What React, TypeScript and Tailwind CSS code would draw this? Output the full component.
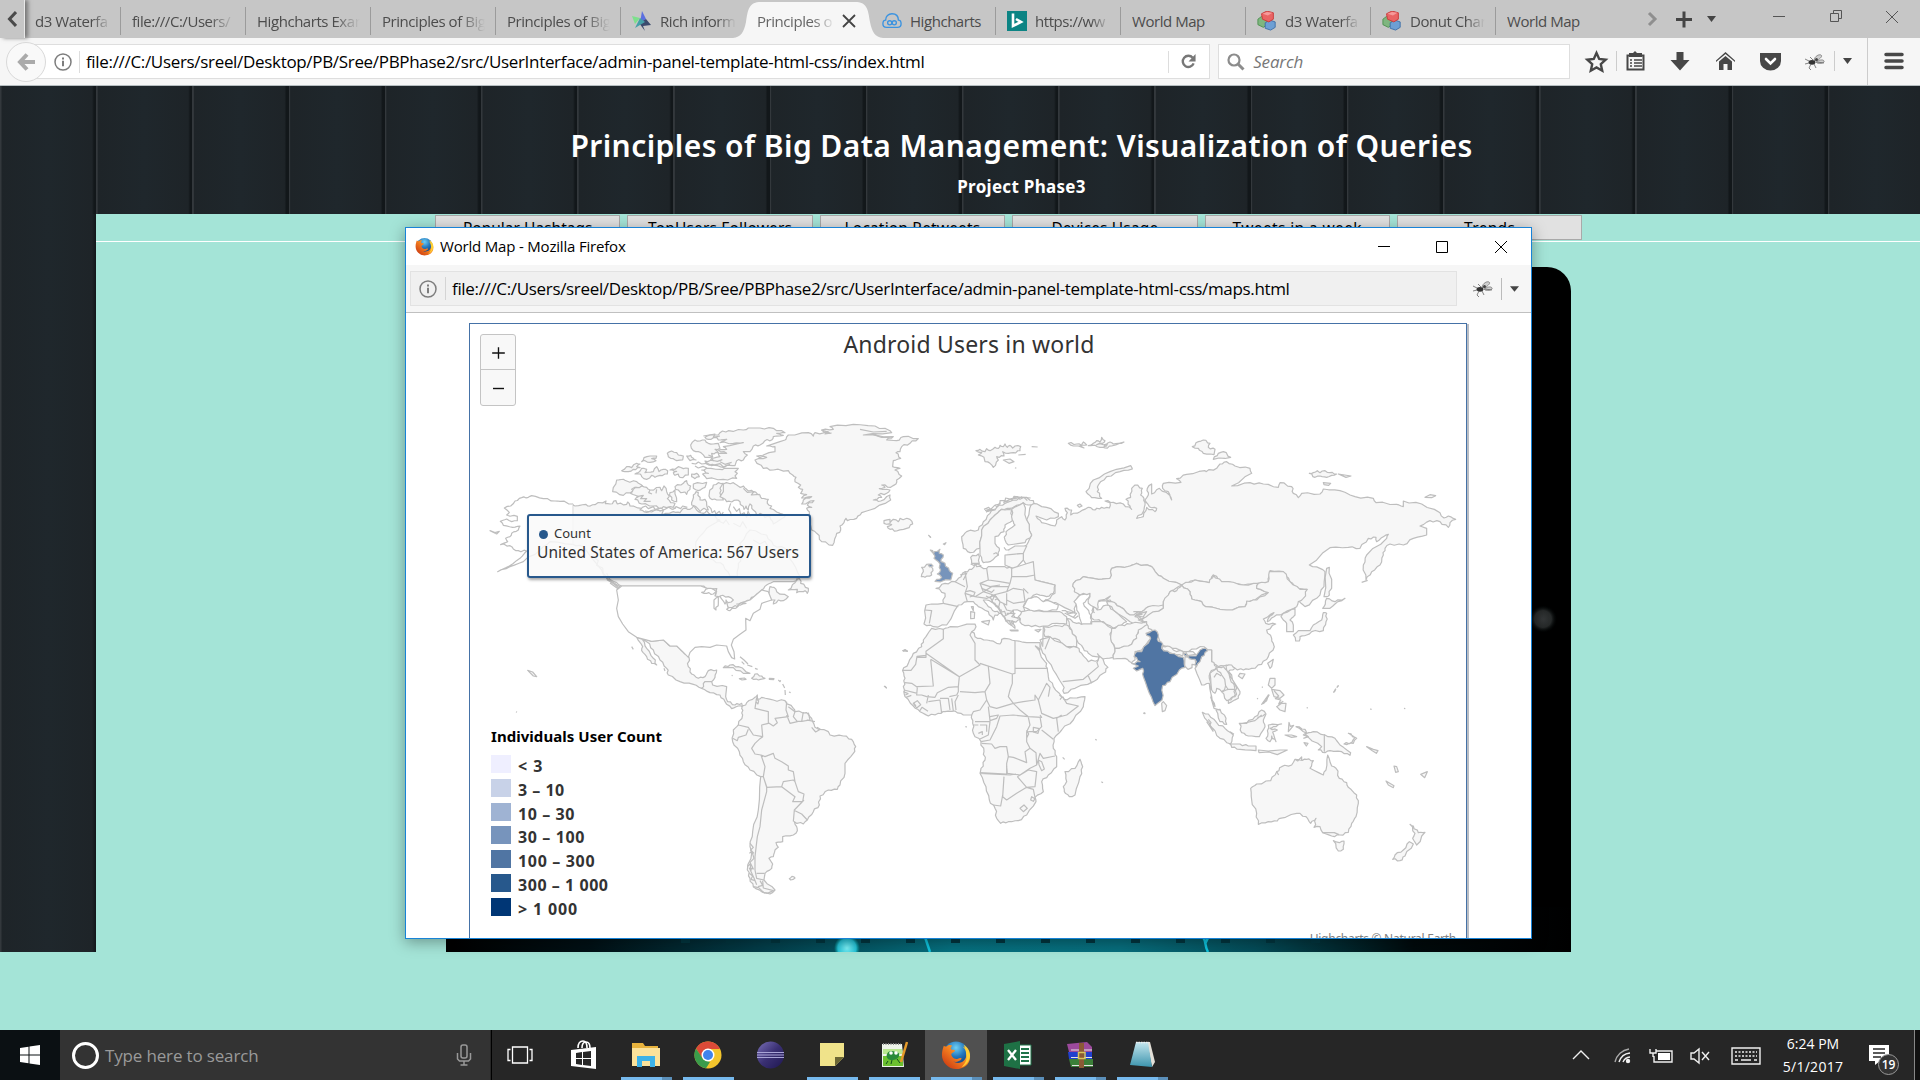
import React, { useLayoutEffect, useRef, useState } from "react";

/* Inline text spaced out to a given width in pixels. */
function Fit({ w, children, className = "" }: { w: number; children: string; className?: string }) {
  const ref = useRef<HTMLSpanElement>(null);
  const [spacing, setSpacing] = useState(0);
  useLayoutEffect(() => {
    if (ref.current) setSpacing((w - ref.current.offsetWidth) / children.length);
  }, [w, children]);
  return (
    <span ref={ref} className={"inline-block whitespace-pre " + className} style={{ letterSpacing: spacing }}>
      {children}
    </span>
  );
}

const Firefox = ({ className }: { className: string }) => (
  <svg viewBox="0 0 32 32" className={className}>
    <defs>
      <radialGradient id="ffb" cx=".5" cy=".25" r=".7"><stop offset="0" stopColor="#6fd0f5" /><stop offset=".5" stopColor="#2478bd" /><stop offset="1" stopColor="#123a78" /></radialGradient>
      <linearGradient id="ffo" x1="1" y1="0" x2="0" y2="1"><stop offset="0" stopColor="#ffd83c" /><stop offset=".45" stopColor="#f58220" /><stop offset="1" stopColor="#c22b10" /></linearGradient>
    </defs>
    <circle cx="16" cy="15" r="13.5" fill="url(#ffb)" />
    <path fill="url(#ffo)" d="M3 6c1 1 2 1 3 1 2-2 4-2 6-1-2 2-2 3-1 4l4 1c0 2-3 2-4 4 0 3 3 6 7 5 2-1 4-1 4 0-2 3-6 4-9 3 7 4 15-1 14-9 0-3-2-5-4-7 5 2 8 6 8 11 0 8-7 13-15 13S1 24 1 16C1 12 2 9 3 6z" />
    <path fill="#ffcf33" d="M24 5c5 3 7 7 7 12-1 6-4 10-9 12 4-4 6-8 5-13-.5-4-1-8-3-11z" />
  </svg>
);

const Info = ({ className }: { className: string }) => (
  <svg viewBox="0 0 18 18" className={className} fill="none" stroke="#7d7d7d" strokeWidth="1.5">
    <circle cx="9" cy="9" r="8" /><path strokeWidth="2" d="M9 7.8v5.4M9 4.6v1.8" />
  </svg>
);

const Bug = ({ className }: { className: string }) => (
  <svg viewBox="0 0 20 18" className={className} fill="none" stroke="#666" strokeWidth=".8">
    <path fill="#cfcfcf" stroke="#777" d="M9 7c1-4 5-6 7-5s-1 4-5 6zM11 9c3-2 7-3 8-1s-4 3-7 2z" />
    <ellipse cx="7" cy="9.3" rx="3.4" ry="2.4" fill="#333" stroke="none" /><circle cx="11.5" cy="6.5" r="1.5" fill="#444" stroke="none" />
    <path d="M4 8 0 6M4 10 0 11M6 11l-2 4 2 2M9 11l2 4M12 9l7 1M8 7 5 4" />
  </svg>
);

const Cubes = () => (
  <svg viewBox="0 0 22 22" className="size-5 shrink-0">
    <path fill="#7fb67f" stroke="#4c8f50" d="M1 9l4-3 6 2v7l-4 3-6-3z" /><path fill="#6d9fd4" stroke="#3c6ea8" d="M9 13l5-3 6 2v6l-5 3-6-2z" />
    <path fill="#e96464" stroke="#c93838" d="M5 3l6-3 7 2v7l-5 3-7-3z" /><path fill="#f59a9a" d="M6 3l5-2 6 1-5 3z" />
  </svg>
);

const Caret = ({ className }: { className: string }) => (
  <svg viewBox="0 0 10 6" className={className}><path d="M0 0h10L5 6z" fill="#444" /></svg>
);

type TabProps = { label: string; icon?: React.ReactNode; last?: boolean; full?: boolean };
function Tab({ label, icon, last, full }: TabProps) {
  return (
    <div className="relative flex h-[38px] w-[125px] shrink-0 items-center pt-1 pl-[11px]">
      {icon && <div className="mr-2 shrink-0">{icon}</div>}
      <div className={"mr-[10px] flex-1 overflow-hidden whitespace-nowrap text-[#4c4c4c] " + (full ? "" : "[mask-image:linear-gradient(to_right,black_75%,transparent)]")}>{label}</div>
      {!last && <div className="h-7 w-px shrink-0 bg-[#9b9b9b]" />}
    </div>
  );
}

function TabStrip() {
  return (
    <div className="relative flex h-[38px] items-center bg-[#c6c6c6] text-[15px] tracking-[-0.45px]">
      <div className="flex h-full w-[25px] shrink-0 items-center justify-center border-r border-white/60 shadow-[3px_0_4px_#777]">
        <svg viewBox="0 0 10 16" className="h-4 w-[10px]" fill="none" stroke="#4a4a4a" strokeWidth="3"><path d="M9 1 2.500 8 9 15" /></svg>
      </div>
      <div className="flex h-full w-[96px] shrink-0 items-center justify-between pt-1 pl-[10px]">
        <span className="w-[76px] overflow-hidden whitespace-nowrap text-[#4c4c4c] [mask-image:linear-gradient(to_right,black_75%,transparent)]">d3 Waterfa</span>
        <div className="h-7 w-px bg-[#9b9b9b]" />
      </div>
      <Tab label="file:///C:/Users/" />
      <Tab label="Highcharts Exar" />
      <Tab label="Principles of Big" />
      <Tab label="Principles of Big" />
      <Tab last label="Rich inform" icon={
        <svg viewBox="0 0 20 20" className="size-5 shrink-0"><path fill="#7de08c" d="M0 5l8 2-5 6z" /><path fill="#5b6fe0" d="M10 0l4 8-6 4z" /><path fill="#3a4a6d" d="M14 8l5 6-8 1 2 5-6-8z" /><path fill="#44a0a8" d="M8 7l5 4-10 6z" /></svg>} />
      <div className="relative flex h-[38px] w-[125px] shrink-0 items-center pt-1 pl-[11px]">
        <svg viewBox="0 0 150 36" className="absolute top-[2px] -left-[13px] h-9 w-[150px]"><path fill="#f6f6f6" d="M0 36C8 35 11 30 13 20 15 7 16 0 28 0h94c12 0 13 7 15 20 2 10 5 15 13 16z" /></svg>
        <span className="relative w-[78px] overflow-hidden whitespace-nowrap text-[#666] [mask-image:linear-gradient(to_right,black_72%,transparent)]">Principles o</span>
        <svg viewBox="0 0 14 14" className="relative ml-[7px] size-[14px]" stroke="#444" strokeWidth="1.800"><path d="M1 1l12 12M13 1 1 13" /></svg>
      </div>
      <Tab full label="Highcharts" icon={
        <svg viewBox="0 0 22 18" className="h-5 w-5 shrink-0" fill="none" stroke="#3b93e0" strokeWidth="1.500"><path d="M5 16C2 16 1 14 1 12s1-4 3-4c0-4 3-7 7-7 5 0 7 3 7 7 2 0 3 2 3 4s-1 4-4 4z" /><circle cx="8.500" cy="11" r="2.300" /><circle cx="13.500" cy="11" r="2.300" /></svg>} />
      <Tab label="https://ww" icon={
        <svg viewBox="0 0 20 24" className="h-6 w-5 shrink-0"><path fill="#0c8484" d="M0 2h20v20H0z" /><path fill="none" stroke="#fff" strokeWidth="2.600" d="M6 4.500v12.500l8-4-5-3" /></svg>} />
      <Tab full label="World Map" />
      <Tab label="d3 Waterfa" icon={<Cubes />} />
      <Tab label="Donut Char" icon={<Cubes />} />
      <Tab full last label="World Map" />
      <svg viewBox="0 0 299 38" className="h-[38px] w-[299px] shrink-0" fill="none">
        <path stroke="#8f8f8f" strokeWidth="3" d="M28 13l6 6-6 6" /><path stroke="#444" strokeWidth="3" d="M55 19.500h16M63 11.500v16" /><path fill="#444" d="M86 16h9l-4.500 6z" />
        <path stroke="#555" d="M152 16.500h12M209.500 13.500h8v8h-8zM212.500 13v-2.500h8v8h-2.500M265 11l12 12M277 11l-12 12" />
      </svg>
    </div>
  );
}

function Toolbar() {
  return (
    <div className="flex h-12 items-center border-b border-[#b5bdc0] bg-[#f6f6f6] text-[17px]">
      <div className="z-10 ml-[6px] flex size-10 items-center justify-center rounded-full border border-[#d9d9d9] bg-[#f9f9f9]">
        <svg viewBox="0 0 18 18" className="size-[18px]" fill="none" stroke="#aaa" strokeWidth="4"><path d="M10 1.500 3 9l7 7.500M4 9h14" /></svg>
      </div>
      <div className="-ml-3 flex h-[35px] w-[1177px] items-center border border-[#dedede] bg-white pl-[19px]">
        <Info className="size-[18px]" />
        <div className="mr-[6px] ml-[7px] h-[22px] w-px bg-[#ddd]" />
        <Fit w={838} className="text-black">file:///C:/Users/sreel/Desktop/PB/Sree/PBPhase2/src/UserInterface/admin-panel-template-html-css/index.html</Fit>
        <div className="mr-3 ml-auto h-[22px] w-px bg-[#ddd]" />
        <svg viewBox="0 0 16 16" className="mr-[13px] size-[15px]" fill="none" stroke="#777" strokeWidth="2.500"><path d="M13.500 10a6 6 0 1 1-1-6" /><path fill="#777" stroke="none" d="M15.500 0v8H8z" /></svg>
      </div>
      <div className="ml-[8px] flex h-[35px] w-[352px] items-center gap-2 border border-[#dedede] bg-white pl-2 text-[#777] italic">
        <svg viewBox="0 0 18 18" className="size-[18px]" fill="none" stroke="#8c8c8c" strokeWidth="2.200"><circle cx="7" cy="7" r="5.500" /><path strokeWidth="3" d="M11 11l5.500 5.500" /></svg>
        <Fit w={50}>Search</Fit>
      </div>
      <svg viewBox="1570 38 350 47" className="h-[47px] w-[350px] shrink-0" fill="none" stroke="#474747">
        <path strokeWidth="2.400" d="M1596.500 53l2.700 6 6.500.7-4.900 4.500 1.400 6.500-5.700-3.300-5.700 3.300 1.400-6.500-4.900-4.500 6.500-.700z" />
        <path stroke="#ccc" d="M1616.500 51v20M1834.500 51v20M1867.500 38v47" />
        <path strokeWidth="2" d="M1627.500 55.500h16v14h-16z" /><path fill="#474747" stroke="none" d="M1629 53h4l2-2 2 2h5v4h-13z" /><path strokeWidth="1.600" d="M1630 60h2M1634 60h8M1630 63h2M1634 63h8M1630 66h2M1634 66h8" />
        <path fill="#474747" stroke="none" d="M1676.500 52h7v8h6l-9.500 10.500-9.500-10.500h6zM1716 62l9.500-8 9.500 8 0-1.500-9.500-8.500-9.500 8.500zM1719 61.500l6.500-5.500 6.500 5.500V70h-4.500v-6h-4v6h-4.500zM1760 53h21v8a10.500 9.500 0 0 1-21 0z" />
        <path stroke="#fff" strokeWidth="2.600" strokeLinecap="round" d="M1766 59l4.500 4.500 4.500-4.500" />
        <path fill="#444" stroke="none" d="M1843 58h9l-4.500 6z" /><path strokeWidth="3.500" strokeLinecap="round" d="M1886 54.500h16M1886 61h16M1886 67.500h16" />
        <svg x="1805" y="53" width="20" height="18"><Bug className="" /></svg>
      </svg>
    </div>
  );
}

const buttons = [["Popular Hashtags", 129], ["TopUsers Followers", 144], ["Location Retweets", 136], ["Devices Usage", 107], ["Tweets in a week", 129], ["Trends", 51]] as const;

/* Land shapes; each group has its own origin at one third of a pixel per unit. */
const northAmerica = [
  "M338 312 345 318 378 313 383 318 405 314 438 303 436 311 450 312 468 302 472 312 500 313 503 306 510 318 545 325 540 330 560 337 580 330 610 332 605 345 640 335 660 338 670 325 690 328 700 318 715 335 730 340 740 332 755 345 780 360 740 385 708 425 710 465 760 480 790 495 810 528 832 528 835 490 848 465 840 430 870 390 920 405 940 435 975 445 1000 490 1020 530 1000 545 940 545 920 555 905 570 890 583 870 600 845 608 825 625 805 625 800 608 790 592 765 588 770 566 750 568 722 558 485 558 470 548 440 535 425 510 400 480 370 440 338 433Z",
  "M470 240 490 238 500 243 530 245 548 258 515 268 520 272 490 286 458 275Z",
  "M512 280 520 268 545 258 560 262 570 270 600 262 605 272 612 258 620 275 628 288 622 296 632 308 645 310 640 322 610 320 605 325 580 318 545 312 525 298 535 290Z",
  "M645 260 670 250 680 242 685 255 692 258 690 268 680 283 675 276 662 278 655 270 647 268Z", "M700 252 740 247 735 262 715 272 700 265Z", "M748 280 760 255 775 248 790 250 780 265 782 285 790 300 770 300 750 295Z",
  "M790 252 820 248 840 262 850 258 860 268 880 275 900 285 905 295 925 298 922 310 935 318 930 325 960 340 975 350 940 372 930 350 915 352 900 340 890 345 880 330 870 312 865 330 858 318 852 328 840 305 830 300 815 306 800 305 790 295 780 290 790 275Z",
  "M700 285 708 275 715 278 720 300 735 298 740 315 745 330 732 325 720 335 710 322 695 315 698 300Z", "M630 278 645 270 650 305 635 300Z",
  "M485 212 500 200 515 203 530 190 540 192 530 200 540 203 520 208 505 215 495 215Z", "M545 185 552 173 570 168 590 168 588 175 575 176 588 182 570 187 555 182Z", "M525 222 535 218 545 205 560 208 555 218 580 215 590 200 597 215 610 208 623 212 622 222 600 226 585 232 575 226 560 238 545 230 540 222Z",
  "M630 210 645 208 655 200 670 206 685 205 685 225 660 232 655 222 645 226 640 218 650 214Z", "M695 222 710 220 718 230 705 236 695 230Z", "M622 160 635 153 650 158 655 165 670 168 668 180 650 182 640 176 625 170Z", "M680 168 692 166 700 175 708 180 690 182Z",
  "M725 210 740 205 780 208 800 205 835 205 825 215 832 220 825 228 830 235 790 238 740 236 728 222 745 220Z",
  "M692 135 705 120 720 123 735 120 745 130 760 132 775 130 780 145 765 148 775 158 755 160 758 170 750 172 735 172 725 160 715 155 700 152Z",
  "M735 112 750 105 775 105 780 98 805 92 850 90 865 84 900 84 940 85 975 98 950 100 970 106 940 110 935 120 915 122 900 135 880 138 870 155 850 155 862 165 850 180 830 182 825 197 800 196 790 202 765 196 740 192 735 183 760 182 755 175 780 170 775 160 800 160 775 150 800 148 790 140 850 128 820 130 780 128 800 118 775 120 770 112 745 118Z",
  "M978 118 985 105 1045 98 1060 108 1065 98 1110 100 1085 90 1120 88 1110 80 1180 73 1245 78 1290 92 1295 98 1210 105 1300 110 1280 120 1310 122 1330 110 1375 116 1350 130 1325 140 1320 155 1308 158 1322 175 1300 182 1298 200 1320 205 1305 210 1325 228 1310 240 1308 252 1292 262 1265 255 1275 262 1258 266 1290 270 1280 280 1255 285 1265 292 1240 300 1262 303 1290 285 1292 300 1245 325 1205 338 1190 355 1162 362 1158 355 1152 368 1140 378 1142 390 1128 408 1118 436 1085 425 1070 400 1055 390 1045 350 1048 335 1040 325 1055 322 1042 315 1062 302 1025 312 1030 300 1055 290 1025 294 1040 284 1022 280 1028 268 1015 262 1022 255 1005 245 1008 232 998 225 985 212 940 210 910 205 885 180 920 172 890 168 945 155 945 140 920 138 975 120Z",
  "M1272 362 1290 358 1290 368 1300 358 1315 365 1320 355 1350 358 1358 372 1340 385 1310 393 1290 388 1282 380 1295 374 1272 370Z",
  "M985 570 1005 548 1020 530 1022 550 1045 565 1042 580 1035 572 1025 575 1010 578 1012 568Z", "M925 585 930 560 942 562 950 575 985 590 970 602 955 600 940 612 945 600 935 600Z",
  "M530 712 575 724 610 720 630 738 650 738 668 755 687 772 685 800 695 822 715 835 735 830 745 812 770 810 765 832 755 845 735 845 733 860 725 865 700 853 660 845 625 825 620 805 600 780 580 750 560 725 548 720 560 745 580 775 590 795 575 790 560 770 545 752 548 740Z",
  "M725 865 735 845 755 845 758 855 800 860 797 890 803 905 825 915 845 910 850 922 835 918 815 926 795 905 780 885 750 878Z",
  "M790 803 810 795 835 800 870 820 850 820 820 803Z", "M875 835 885 822 905 828 915 835 895 840Z", "M838 836l15-2 5 4-12 2ZM928 835l14 1-1 3-13-1Z", "M1405 405l8 8M90 392l15 6 13-4-8 8zM515 740l5 8",
  "M203 811l15 5 12 14-10-2zM168 935l3 2M955 840l5 5 2-4M968 852l6 12M975 870l1 15M987 876l5 2M815 826l3 1M612 805l3 8",
  "M1330 755 1336 749 1343 754M1275 858l5 7M840 770l12 10 12 12M845 785l8 8M862 795l15 5M885 805l8 3",
];
const northDetails = [
  "M545 323l12-5 8 8 15-6 5 8 18-4 8 6 15-8 10 6 12-4M555 333l20 3 15-8 12 6M640 328l8-8 14 6 6-8 14 4M745 318l8 8 3 12 8-6 4 10 10-8 6 12 6-10M812 310l-6 18 6 10 2 12M820 320l10 14 8-8 4 18 10-6 8 14 4-18 8 16",
  "M695 190l12 2 8-6 10 6 16-2M705 198l10 6 14-5 12 5M745 165l12 5-5 10 20 4 15-5M780 185l15 8 20-6M735 185l20 12 25-6 10 10 20-8M530 290l20-4-8 10 18 0-8 8 20 0M570 270l-4 8 10 4M590 268l-2 12M1085 90l20 6-10 6 20-3M1200 88l40 8 40-2M1240 104l25 8 20 0M730 108l35-6-5 10 20-4M850 265l12 12 20-2-8 10 25-2",
  "M820 370l20 10 8-15 12 20M880 420l20 12 15-8 10 18M770 360l20 10 8-10 10 15M400 470l15 12-5 14 18 8 2 20 12 10 0 6 20 12 20 16M445 538l35 22-5 7-25-18M440 520l12 22M705 590l0 0M225 440l30-8 10-8M1150 440",
];
const usa = [
  "M338 312 300 304 285 303 250 296 215 287 205 292 185 293 165 303 152 318 133 324 148 337 140 345 172 349 172 362 155 365 140 357 121 364 130 376 158 382 180 378 175 390 155 400 150 410 137 415 143 425 122 434 150 437 160 447 175 452 200 453 180 475 148 498 113 515 150 500 190 485 240 450 270 425 338 433",
  "M485 558H722L750 568 770 566 765 588 790 592 800 608 805 625 825 625 845 608 870 600 890 583 905 570 925 575 935 600 905 610 900 628 880 640 870 662 857 655 858 690 840 703 820 718 814 735 822 755 824 777 815 773 805 755 800 738 770 735 750 742 725 740 705 742 690 757 685 772 668 755 650 738 630 738 610 720 575 724 530 712 505 695 488 672 475 650 470 625 475 600 470 570Z",
];
const lakes = ["M725 577 745 565 760 568 770 575 760 582 740 580Z", "M762 625 762 600 775 590 775 610 768 630Z", "M780 588 805 590 820 600 805 608 798 600 795 612Z", "M800 628 825 617 835 618 810 632Z", "M830 612 850 608 858 610 840 616Z"];

const southAmerica = [
  "M845 205 860 188 885 172 892 165 893 178 905 172 940 180 975 182 1000 205 1005 215 1040 218 1055 235 1065 262 1105 275 1110 285 1150 288 1175 298 1187 320 1180 340 1155 370 1155 400 1140 435 1132 448 1105 450 1080 468 1078 495 1060 515 1042 540 1030 552 1003 545 1010 560 1012 572 1000 585 968 590 968 605 948 608 955 622 945 630 940 650 927 655 938 672 935 685 915 700 912 720 945 750 930 762 905 755 880 740 870 715 862 690 875 640 870 620 878 575 895 510 902 410 870 390 850 365 838 335 818 305 820 270 835 255 848 225Z",
];
const southBorders = [
  "M890 172 885 205 925 215 925 250 905 255 908 290 880 285 865 262 835 255M980 185 978 210 985 230 945 235 952 248 940 258 925 248M985 200 1005 215 1000 230 1012 245 990 250 980 225M1030 216l-5 28-15 0M1045 218l5 22-25 4M1055 262l12 14 14-8-10-6M1065 245 1040 240",
  "M865 268 858 285 835 292 832 302 818 295M908 290 900 296 885 310 875 325 885 342 903 345 915 350 940 340 945 355 965 365 985 378 985 390 1000 395 1005 425 1000 420 970 425 965 440 920 442 910 410 915 380 903 345M902 410 910 410 920 440 920 455 905 510 900 560 892 590 885 650 885 690 890 715 912 720M965 440 1005 470 998 485 1028 485 1032 462 1015 455 1005 425M1032 480 1003 510 1000 545M1005 512 1025 522 1042 540M890 700h24",
  "M988 716 996 709 1005 714 992 720Z",
  "M868 640l8-5 6 20-12 12 10 20-12-3 14 30 8 20M880 740l16 3 18 17M870 610l10 12-8 8 10 10M862 680l8-8 4 20M868 700l10 8-5 10 12 4M888 178l8 4-2 10-6-6M900 722l8 14-14 4M908 722l2 22 30 8-18 8-16-4",
];

const africa = [
  "M155 85 190 88 210 80 285 72 288 80 275 95 292 115 320 120 330 122 360 132 365 118 380 116 405 122 440 128 480 128 480 150 466 138 495 185 502 205 505 230 520 260 545 290 552 298 580 294 615 290 610 320 580 360 545 390 522 415 520 445 530 470 530 500 505 525 485 545 490 575 465 592 468 605 440 645 415 662 385 665 362 670 350 655 345 625 328 600 318 560 300 520 303 505 315 480 312 455 303 425 280 400 278 370 275 345 250 345 225 333 195 335 175 340 145 348 120 335 100 318 75 290 70 260 75 235 68 212 85 190 100 160 125 140 130 120Z",
  "M600 478 608 500 600 530 585 585 568 590 553 575 550 560 560 545 555 515 585 505Z",
];
const africaBorders = [
  "M190 88l0 28-52 38-0 12-27 3-4 24-14 18h-27M138 162l0 10h-27M138 160 238 230 300 195 285 180 285 130 270 105 275 95M300 190 397 222 405 220 405 122M405 205H502M152 178 160 258 110 260M112 262 95 250 75 248M152 178 238 230M238 230 235 260 205 262 172 278 165 292 140 290 125 285 110 285 112 262M235 260 235 275 230 285 208 290M72 270l40 10M240 275 285 278 315 275 330 250 325 200M397 222 397 250 390 270 385 290 400 310 350 325 330 320 320 300 315 275M400 310 430 305 465 300 465 285 475 300 500 250 510 262 505 290 M475 300 485 340 520 355 560 345 595 318 560 310 548 290M320 300 300 330 280 335 275 345M325 320 330 362 350 355 355 345 330 350M400 310 420 330 445 350 485 352 480 345M445 350 400 345 360 348 350 380 330 420 303 425M285 365h45l-5 40-25 12M280 375h15M445 352 450 375 440 395 440 425 450 445 435 455 440 488 400 472 385 470 380 440 360 440 345 445 335 432 305 430M385 470 380 490 380 522 300 518M380 500 382 520 420 525 450 505 470 495 468 458 450 445M470 495 480 460 490 475 525 468M480 350 485 380 470 395 445 395M485 390 520 418M535 395 530 355 545 345M300 520 390 525 408 522M372 530 368 590 380 600 410 580 440 562 412 530M368 585 362 618 340 615M440 562 465 560 470 515 445 510 412 530M440 562 460 568 465 592M420 625l12-10 10 10-12 10zM455 590l10 6-5 8-8-4zM475 480l10 5 8 22-8 5-8-18zM100 310l12-8 10 12-12 10zM140 310l5-25M145 305 180 300 185 340M180 295 205 295 210 330M215 295l5 38M228 330 225 305 235 285M440 390l6 12-6 12",
  "M460 382l18 4-4 14-14-4Z",
  "M70 275l14 6-8 4M78 292l16-6M108 318l-6-8M118 334l8-12 18 12M538 285l8 6-6 8M300 375l20 0 0 20M295 400l12-5 0 10",
  "M12 258l8 6M68 152l14 2-8-5zM256 380l5 1M548 472l6 6M646 418l4 3M664 545l5 3M791 338l5 2",
];

const europe = [
  "M455 250 500 262 535 280 535 290 500 300 468 288 485 308 525 318 530 300 545 290 555 300 562 278 555 265 575 270 572 285 600 275 625 262 645 270 665 262 688 264 690 248 675 243 700 247 730 252 755 268 750 258 738 238 752 232 755 205 765 195 787 205 782 225 792 235 795 255 790 275 770 295 790 290 800 262 825 275 830 265 808 260 795 240 805 225 802 205 815 192 815 222 838 205 868 225 875 240 865 215 848 205 850 190 903 187 890 176 920 163 975 152 978 155 1010 145 1020 132 1040 125 1065 138 1110 145 1115 160 1055 198 1110 188 1150 192 1195 202 1200 188 1235 200 1240 220 1255 233 1265 220 1320 222 1330 207 1380 212 1425 230 1480 235 1488 248 1550 253 1570 260 1570 243 1625 252 1680 278 1692 294 1705 288 1727 298 1710 308 1705 322 1680 305 1650 302 1620 318 1640 325 1640 345 1600 355 1570 375 1530 372 1515 385 1510 405 1500 435 1475 455 1458 480 1450 435 1460 405 1520 355 1525 343 1510 350 1490 365 1488 352 1465 355 1440 385 1405 382 1350 383 1288 435 1320 445 1335 455 1332 500 1310 535 1275 560 1258 545 1280 508 1250 505 1230 485 1210 455 1170 452 1165 488 1135 490 1090 495 1045 485 1025 485 1000 465 988 488 945 480 905 495 850 475 830 460 815 440 770 430 750 438 695 445 690 475 655 478 610 470 580 490 585 515 600 525 588 540 585 578 540 555 500 540 525 520 525 495 465 480 460 455 430 420 430 385 440 375 455 345 440 300Z",
  "M245 350 260 335 295 330 310 305 330 280 350 262 375 250 400 240 430 232 460 242 462 250 445 255 430 248 400 262 390 265 365 268 345 285 330 300 305 330 300 385 270 398 250 385Z",
  "M300 385 305 330 330 300 345 285 365 268 395 270 397 302 375 315 372 335 345 350 345 370 358 385 355 405 330 425 310 428 300 405Z",
  "M397 300 395 268 430 248 440 300 455 345 435 368 385 375 375 360 378 335 405 315 400 305Z",
  "M272 412 295 402 298 430 275 430Z", "M385 390 405 378 440 378 430 400 380 405M375 405 405 402 430 400 430 420 405 448 375 435Z",
  "M255 455 275 448 285 432 290 440 320 445 325 440 375 440 395 445 460 425 465 480 525 495 520 520 500 530 470 522 440 540 430 560 435 575 400 570 400 585 422 600 400 605 405 625 380 605 360 570 345 550 320 540 310 540 325 560 345 575 365 580 345 585 340 600 325 575 295 560 280 545 262 545 235 555 200 615 160 620 132 612 138 555 190 550 195 520 168 505 195 490 225 485 235 475Z",
  "M425 575 450 570 490 575 540 575 560 590 560 612 530 610 490 618 455 620 425 612 415 590Z",
  "M124 470 130 455 125 442 148 432 158 445 155 465 135 472Z",
  "M288 92 300 88 315 95 320 86 330 92 345 82 355 85 360 76 370 80 375 72 382 82 390 76 398 84 405 78 422 80 420 92 400 98 385 100 368 95 372 108 350 110 355 120 340 142 330 130 315 125 312 112 295 105 305 98Z", "M370 120l20-3 12 8-15 5Z", "M455 80l18 1M415 105l22-2M405 143l4 2",
  "M565 70 590 72 605 76 610 66 620 75 600 76 612 84 595 78 580 78Z", "M625 77 640 70 650 62 660 66 665 52 675 62 668 70 650 74 680 72 672 80 690 66 700 72 715 70 732 66 695 78 675 84 660 82 645 76Z",
  "M618 215 640 180 690 155 752 137 757 147 720 155 680 170 655 195 652 215 665 235 635 233Z", "M592 256l8-4 6 6-8 4Z",
  "M937 80 955 65 970 60 990 70 985 82 1005 88 1002 104 970 100 955 85Z", "M1000 118 1015 100 1030 95 1052 112Z",
  "M1288 160 1300 158 1312 152 1320 158 1335 152 1350 158 1370 162 1355 166 1340 172 1320 168 1305 172Z", "M1375 162l38 6-15 4zM1330 188l22 2-6 6-14-2zM1635 232l15-8 17 3-12 6z",
  "M305 605l24-4-4 14zM272 575l12 2-1 18-11 1zM274 560l6 0 0 12zM390 630h24v3h-20zM465 630l18-2-8 8z",
];
const europeBorders = [
  "M255 455 262 500 255 520 285 530 310 515 300 490 325 480 320 445M325 480 360 485 390 490 395 470 395 445M390 490 380 515 340 525 310 515 335 500 385 500M255 520 262 545M285 530 320 535 345 525 360 545 380 555 380 520M380 515 400 505 430 510 435 545 400 550 380 540M360 545 355 565 370 590 390 580 400 570M345 525 335 545 360 570M225 485 255 500M190 550 235 560M135 570 155 572 148 610M395 470 440 470 465 465M430 505 445 520M330 530 340 550 355 560M370 550l10 20 20 5M300 490l30 10 30-5M250 480l10-20-20 5M380 580l25 0-10 10 20 5M380 600l20 5-5 10",
  "M370 248l25-12 22-2 10-4M315 272l15-5-10 8 25-8M345 255l15-3 0-10 15 0 2-8 20 5 5-10 20 3 30 2M560 575l30 5-10 12-25-12 30 15 10-8",
  "M312 268l14-6 6 6 12-12 8 4 8-12M318 276l20-8M400 234l12-4 8 8 12-6 10 10M370 242l16 4M272 432l10 4 12-4 10 6M340 402l8-4 8 8M372 382l6 8 10 0M258 515l12-3 15 5-4 10-12 4M305 505l30 12 8-8M318 528l12 6 6-8 14 6M345 540l6-4 8 8M362 568l4 8 8-2 4 12M372 590l6 14 10-2 4 12 4-12 8 4M440 545l12-10 8 6M478 540l12 6 8-8 6 6",
  "M158 392l5 12-12-14zM148 348l4 5M190 372l8-4-4 6z",
];
const asia = [
  "M580 490 610 470 655 478 690 475 695 445 750 438 770 430 815 440 830 460 850 475 905 495 870 515 865 535 850 545 850 565 805 560 785 575 750 585 720 560 700 550 690 540 655 545 652 570 640 560 625 550 630 520 600 525 583 515Z",
  "M640 560 652 570 680 555 700 570 740 605 725 615 700 625 670 605 650 600 635 595Z",
  "M680 545 695 545 720 560 750 585 785 575 800 600 780 615 750 605 700 570Z",
  "M785 575 805 560 850 555 850 565 805 590 785 600 765 590Z",
  "M560 595 590 610 610 612 635 612 635 605 665 605 695 625 692 650 705 690 700 712 665 718 625 700 610 685 590 660 575 630Z",
  "M695 625 725 615 750 612 800 605 805 620 775 635 770 655 745 678 705 685 692 655Z",
  "M705 685 745 678 770 655 775 630 805 612 830 630 800 640 812 655 785 690 765 695 765 720 755 728 735 715 700 717Z",
  "M490 620 540 618 560 615 575 630 590 660 590 680 560 680 525 655 495 650Z",
  "M480 660 495 655 510 650 560 680 590 682 605 700 625 725 655 720 658 708 684 742 670 760 640 785 585 805 552 820 548 795 520 750 495 705 485 690Z",
];
const asiaBorders = ["M548 785 610 778 655 740 650 725M625 768l10 22M510 650l-15 38M490 620l-2 60M652 700l6 10-6 16M805 592l-30 8 20 8-25-25 30-8-10 15 15 10M760 575l16 0 10 8-20 4 24 4M545 572l12 0 8 10 14-4M655 542l20-4 16-10-12 12M640 562l-4 10 8 6"];
const eastAsia = [
  "M185 495 225 480 268 488 280 465 305 485 325 485 370 495 415 490 410 505 445 518 385 545 375 560 320 570 257 560 245 545 215 537 210 515Z",
  "M185 495 210 515 215 537 245 545 257 560 320 570 375 560 380 543 410 540 445 518 410 505 415 490 445 485 448 455 490 455 510 485 540 508 562 508 550 535 535 545 530 560 490 580 462 590 442 605 445 595 462 578 430 597 437 610 467 612 440 630 455 655 460 670 463 680 445 710 425 733 395 745 370 750 345 745 320 735 295 740 275 725 275 690 240 680 205 695 150 685 125 672 110 645 85 625 80 605 65 600 85 585 130 565 130 545 150 515 170 512Z",
  "M128 678 150 680 160 690 190 695 188 708 155 700 125 688Z", "M197 695l22 0 8 8-24 4ZM195 710l30 5 3 20-12-2 0 10-12 5-10-10Z",
  "M260 690 275 690 275 725 290 740 270 760 268 775 275 830 285 860 275 840 268 790 245 795 225 745 240 720 250 700Z",
  "M270 760 290 745 320 775 325 790 305 815 290 805 285 820 275 810Z", "M290 745 310 740 335 765 345 810 325 810 305 765Z", "M305 815 325 808 345 808 342 830 320 842Z", "M318 738 335 735 345 745 325 755 335 775 360 815 355 835 325 850 325 840 345 830 350 805 330 775Z",
  "M355 768l5-8 15 2-8 14ZM443 730 460 718 455 740 450 745ZM445 795 450 775 465 775 465 795 455 805ZM455 808 480 812 492 825 480 835 462 830ZM470 860 485 850 498 850 495 875 480 870ZM425 853 445 825 440 842ZM462 812l14 16-10 8 16 4-6 12 14-8",
  "M483 590 490 600 500 610 500 635 520 635 520 615 510 600 525 585 525 565 490 580Z",
  "M520 645 535 632 570 632 580 615 605 600 610 578 620 580 618 605 610 632 575 635 560 645 540 650 538 663 527 663Z",
  "M608 565 612 560 620 535 645 545 675 535 645 552 630 565Z", "M612 530 620 445 628 442 635 495 628 525 620 530Z",
  "M125 850l5-5 10 12-5 15-8 3Z", "M725 487l18-6M640 818l8-12M650 803l6-7M560 863l4 1M750 867l5 1M852 865l4 1M70 880l6 1M426 800l2 3M411 835l3 2",
];
const india = [
  "M78 640 105 630 115 645 112 658 128 672 125 685 150 700 190 712 195 742 178 750 150 785 128 797 126 840 105 857 88 820 70 770 68 745 50 753 40 745 55 738 35 730 60 725 42 710 50 695 65 695 92 655Z",
  "M190 698 205 708 228 708 240 690 258 685 262 693 245 710 240 725 228 740 225 718 208 716Z",
];
const oceania = [
  "M332 565 350 552 392 542 410 515 425 500 455 495 465 478 480 480 500 478 520 482 510 505 550 525 558 510 563 465 575 498 588 505 598 535 620 548 625 562 650 585 655 610 648 650 635 670 625 697 600 705 575 708 548 698 540 680 522 682 528 655 512 670 498 650 470 640 420 655 412 663 385 665 355 673 350 640 335 600Z",
  "M580 722 598 728 612 723 610 748 595 753Z", "M810 673 820 678 835 698 855 697 830 735 818 715 825 700Z", "M808 725 820 732 795 768 780 782 758 778 765 765 790 750Z",
  "M187 337 205 342 230 368 255 385 280 405 272 432 240 415 215 385Z", "M228 330 240 328 258 355 260 373 240 365Z",
  "M270 432 300 432 325 438 348 438 348 452 300 448 275 442Z", "M355 450l30 3 35-3 22 0-30 14-25-8-30 2z",
  "M298 370 320 370 345 350 365 330 378 342 370 360 375 380 358 410 325 408 305 398Z", "M385 375 425 372 400 380 390 385 412 390 398 396 408 425 395 408 390 425 378 415 384 400Z",
  "M468 380 495 388 500 400 520 395 555 405 585 415 600 435 632 458 630 466 605 455 570 452 555 458 535 450 545 440 505 412 490 405 500 400Z",
  "M612 432 635 428 645 412 625 400 650 415 640 430Z", "M435 405l20 0 15 5-15 2zM445 395l2-28 4 12 10-3-10 12zM680 440l20 8 14 4-5 8-12-8zM762 498l8 2 5 15-8 2zM738 543l24 14-2 6-15-8zM842 523l20-8-8 18zM492 428l12 2-5 8z",
  "M200 365l20 30M583 277l4-10M592 262l2-5M270 395l12 8M370 312l18-28",
];
const oceaniaBorders = ["M553 403V455M300 372 345 362 365 345M212 290 222 325 240 330M410 515l6 10M465 478l8 5 12-12 0 10M548 698l35 0 14 6M495 402l10 8-15 5M352 352l16-4 8-6M205 358l8 10-4 8 14 14M222 232l8-12 14 8"];

/* Breaks long coast segments with a small offset midpoint, the same one for both directions. */
function roughen(d: string) {
  if (!/^M[\d\s]+Z?$/.test(d)) return d;
  const closed = d.endsWith("Z");
  const n = d.replace(/[MZ]/g, "").trim().split(/\s+/).map(Number);
  const pts: number[][] = [];
  for (let i = 0; i < n.length; i += 2) pts.push([n[i], n[i + 1]]);
  const out: string[] = [];
  pts.forEach(([x, y], i) => {
    out.push(`${x} ${y}`);
    if (i === pts.length - 1 && !closed) return;
    const [u, v] = pts[(i + 1) % pts.length];
    const len = Math.hypot(u - x, v - y);
    if (len < 9 || u === x || v === y) return;
    const k = Math.sin((x + u) * 12.9 + (y + v) * 7.23);
    const a = Math.min(3.2, len * 0.14);
    const side = u > x ? 1 : -1;
    const ox = (-(v - y) / len) * a * k * side;
    const oy = ((u - x) / len) * a * k * side;
    if (len > 20) {
      const p = x < u ? [x, y, u, v] : [u, v, x, y];
      const near = `${p[0] + (p[2] - p[0]) * 0.32 + ox} ${p[1] + (p[3] - p[1]) * 0.32 + oy}`;
      const far = `${p[0] + (p[2] - p[0]) * 0.68 - ox * 0.7} ${p[1] + (p[3] - p[1]) * 0.68 - oy * 0.7}`;
      if (x < u) out.push(near, far);
      else out.push(far, near);
    } else out.push(`${(x + u) / 2 + ox} ${(y + v) / 2 + oy}`);
  });
  return "M" + out.join(" ") + (closed ? "Z" : "");
}

const Shapes = ({ at, d, fill = "#f7f7f7" }: { at: string; d: string[]; fill?: string }) => (
  <g transform={`translate(${at}) scale(.33333)`} fill={fill}>{d.map((p, i) => <path key={i} d={roughen(p)} />)}</g>
);

function WorldMap() {
  return (
    <svg viewBox="470 324 996 614" className="absolute top-0 left-0 h-[614px] w-[996px]" stroke="#bebebe" strokeWidth="3.600" strokeLinejoin="round">
      <Shapes at="460 400" d={northAmerica} />
      <Shapes at="460 400" d={northDetails} fill="none" />
      <Shapes at="460 400" d={usa} fill="#fff" />
      <Shapes at="460 400" d={lakes} fill="#fff" />
      <Shapes at="460 640" d={southAmerica} />
      <Shapes at="460 640" d={southBorders} fill="none" />
      <Shapes at="880 600" d={africa} />
      <Shapes at="880 600" d={africaBorders} fill="none" />
      <Shapes at="880 420" d={europe} />
      <Shapes at="880 420" d={europeBorders} fill="none" />
      <Shapes at="880 420" d={["M430 560 445 535 470 530 490 545 505 542 535 555 530 570 490 573 450 570Z", "M600 525 630 518 625 535 610 550 620 565 628 580 635 600 632 612 605 612 598 590 590 560 582 545Z"]} fill="#fff" />
      <Shapes at="880 420" d={asia} />
      <Shapes at="880 420" d={asiaBorders} fill="none" />
      <Shapes at="1120 420" d={eastAsia} />
      <Shapes at="1120 420" d={india} fill="#5075a3" />
      <Shapes at="1140 600" d={oceania} />
      <Shapes at="1140 600" d={oceaniaBorders} fill="none" />
      <Shapes at="880 420" d={["M163 395 180 388 178 400 190 405 183 425 195 430 208 452 218 460 212 480 165 484 185 472 172 462 182 450 175 425 162 415Z", "M145 436l8-4 6 6-10 3z"]} fill="#7794bb" />
    </svg>
  );
}

const legend = [
  ["bg-[#efefff]", "< 3", 25], ["bg-[#c8d2e8]", "3 – 10", 47], ["bg-[#9fb3d3]", "10 – 30", 57], ["bg-[#7794bc]", "30 – 100", 67],
  ["bg-[#5075a3]", "100 – 300", 77], ["bg-[#27588c]", "300 – 1 000", 91], ["bg-[#003675]", "> 1 000", 60],
] as const;

function PopupWindow() {
  return (
    <div className="absolute top-[227px] left-[405px] flex h-[712px] w-[1127px] flex-col overflow-hidden border border-[#1883d7] bg-white shadow-[0_3px_14px_rgba(0,0,0,.35)]">
      <div className="flex h-[37px] shrink-0 items-center pl-[9px] text-[15px] text-black">
        <Firefox className="mr-[6px] size-[19px]" />
        <Fit w={186}>World Map - Mozilla Firefox</Fit>
        <svg viewBox="0 0 140 14" className="mr-[17px] ml-auto h-[14px] w-[140px]" fill="none" stroke="#000"><path d="M4 6.500h12M62.500 1.500h11v11h-11zM121 1l12 12M133 1l-12 12" /></svg>
      </div>
      <div className="flex h-12 shrink-0 items-center border-b border-[#c0c0c0] bg-[#f6f6f6] pl-1 text-[17px]">
        <div className="flex h-[35px] w-[1047px] items-center border border-[#e2e2e2] bg-[#f0f0f0] pl-2">
          <Info className="size-[18px]" />
          <div className="mr-[6px] ml-2 h-[23px] w-px bg-[#d4d4d4]" />
          <Fit w={838} className="pt-px text-black">file:///C:/Users/sreel/Desktop/PB/Sree/PBPhase2/src/UserInterface/admin-panel-template-html-css/maps.html</Fit>
        </div>
        <Bug className="ml-4 h-[18px] w-5" />
        <div className="mx-2 h-[22px] w-px bg-[#bbb]" />
        <Caret className="h-[6px] w-[9px]" />
      </div>
      <div className="mt-[10px] ml-[63px] h-[640px] w-[998px] shrink-0 border border-[#4572a7] shadow-[2px_1px_0_#b9bdc4]">
        <div className="relative font-['Noto_Sans','Open_Sans',sans-serif]">
          <WorldMap />
          <div className="relative pt-[2px] pl-[2px] text-center text-[23px] leading-[36px] text-[#333]"><Fit w={251}>Android Users in world</Fit></div>
          <div className="absolute top-[10px] left-[10px] h-[72px] w-9 divide-y divide-[#c4c4c4] rounded-[3px] border border-[#c4c4c4] bg-[#f8f8f8]">
            <svg viewBox="0 0 34 35" className="h-[35px] w-[34px]" stroke="#111" strokeWidth="1.400"><path d="M11 18.500h13M17.500 12.500v12" /></svg>
            <svg viewBox="0 0 34 35" className="h-[35px] w-[34px]" stroke="#111" strokeWidth="1.400"><path d="M12 18.500h11" /></svg>
          </div>
          <div className="absolute top-[190px] left-[57px] h-[64px] w-[284px] rounded-[3px] border-2 border-[#27588c] bg-[#f9f9f9]/85 pt-[9px] pl-2 text-[#333] shadow-[1px_2px_3px_rgba(0,0,0,.35)]">
            <div className="flex h-[18px] items-center gap-[6px] pl-[2px] text-[13px]"><span className="size-[9px] rounded-full bg-[#27588c]" /><Fit w={37}>Count</Fit></div>
            <div className="text-[15.500px] leading-[19px]"><Fit w={262}>United States of America: 567 Users</Fit></div>
          </div>
          <div className="absolute top-[401px] left-[21px] font-bold text-[#333]">
            <div className="h-[29px] text-[15px] leading-[22px] text-black"><Fit w={171}>Individuals User Count</Fit></div>
            {legend.map(([color, label, w]) => (
              <div key={label} className="flex h-[23.800px] gap-[7px]">
                <span className={"mt-[1px] h-[18px] w-5 " + color} />
                <span className="text-[16px] leading-[24px]"><Fit w={w}>{label}</Fit></span>
              </div>
            ))}
          </div>
          <div className="absolute top-[606px] right-[10px] text-[12px] leading-[18px] text-[#808080]"><Fit w={146}>Highcharts © Natural Earth</Fit></div>
        </div>
      </div>
    </div>
  );
}

function Page() {
  return (
    <div className="relative flex h-[944px] flex-col overflow-hidden bg-[#a4e4d7]">
      <div className="flex h-[128px] shrink-0 flex-col items-center bg-[repeating-linear-gradient(90deg,#33383c_0px,#33383c_1px,#1e2428_2px,#1f272c_48px,#1e2428_92px,#12171a_94px,#12171a_96.2px)] pl-[123px] font-['Noto_Sans','Open_Sans',sans-serif] text-white">
        <div className="mt-[38px] text-[30px] leading-[44px] font-semibold"><Fit w={902}>Principles of Big Data Management: Visualization of Queries</Fit></div>
        <div className="mt-[5px] text-[17px] leading-[28px] font-bold"><Fit w={128}>Project Phase3</Fit></div>
      </div>
      <div className="flex h-[738px] shrink-0">
        <div className="w-24 shrink-0 bg-[linear-gradient(90deg,#33383c_0px,#33383c_1px,#1e2428_2px,#1f272c_48px,#1e2428_92px,#12171a_96px)]" />
        <div className="flex-1">
          <div className="flex h-7 gap-[7px] border-b border-white pt-[1px] pl-[339px] font-['Noto_Sans','Open_Sans',sans-serif]">
            {buttons.map(([label, w]) => (
              <div key={label} className="h-[25px] w-[185.400px] border border-[#a9a9a9] bg-[#e1e1e1] text-center text-[15.500px] leading-[24px] text-black"><Fit w={w}>{label}</Fit></div>
            ))}
          </div>
          <div className="mt-[25px] ml-[350px] flex h-[685px] w-[1125px] flex-col justify-end overflow-hidden rounded-tr-[24px] bg-black">
            <svg viewBox="0 0 1125 685" className="h-[685px] w-[1125px]">
              <defs>
                <linearGradient id="glow"><stop offset="0" stopColor="#000" /><stop offset=".13" stopColor="#011116" /><stop offset=".28" stopColor="#033d49" /><stop offset=".45" stopColor="#067180" /><stop offset=".6" stopColor="#076e7d" /><stop offset=".72" stopColor="#044c58" /><stop offset=".86" stopColor="#000a0c" /><stop offset="1" stopColor="#000" /></linearGradient>
                <radialGradient id="orb"><stop offset="0" stopColor="#7ff4fa" /><stop offset=".7" stopColor="#25c4d8" /><stop offset="1" stopColor="#0aa" stopOpacity="0" /></radialGradient>
                <radialGradient id="haze"><stop offset="0" stopColor="#343738" /><stop offset=".6" stopColor="#262929" /><stop offset="1" stopColor="#010707" stopOpacity="0" /></radialGradient>
              </defs>
              <rect y="640" width="1125" height="45" fill="url(#glow)" />
              <path stroke="#023640" strokeWidth="4" strokeDasharray="9 36" d="M235 674H900" />
              <circle cx="401" cy="681" r="13" fill="url(#orb)" />
              <path stroke="#0fc5df" strokeWidth="2.500" fill="none" d="M479 670l5 15M757 670c4 6 1 8 5 15M762 671l-3 6" />
              <circle cx="1097" cy="352" r="14" fill="url(#haze)" />
            </svg>
          </div>
        </div>
      </div>
      <div className="absolute top-[-86px] left-0"><PopupWindow /></div>
    </div>
  );
}

function TaskItem({ children, active, line = "plain" }: { children: React.ReactNode; active?: boolean; line?: "plain" | "split" | "none" }) {
  return (
    <div className={"flex h-[50px] w-[62px] shrink-0 flex-col items-center " + (active ? "bg-[#505050]" : "")}>
      <div className="flex flex-1 items-center pt-[3px]">{children}</div>
      {line !== "none" && <div className="flex h-[3px] w-[51px]"><span className="flex-1 bg-[#76b9ed]" />{line === "split" && <span className="w-[10px] bg-[#5b8fb9]" />}</div>}
      {line === "none" && <div className="h-[3px]" />}
    </div>
  );
}

function Taskbar() {
  const ic = "size-7";
  return (
    <div className="flex h-[50px] bg-[#262626] font-['Open_Sans',sans-serif]">
      <div className="flex w-[60px] shrink-0 items-center justify-center bg-[#0b1013]">
        <svg viewBox="0 0 20 20" className="size-5" fill="#fff"><path d="M0 3l8.500-1.200V9.500H0zM9.500 1.600 20 0v9.500H9.500zM0 10.500h8.500v7.700L0 17zM9.500 10.500H20V20L9.500 18.400z" /></svg>
      </div>
      <div className="flex w-[430px] shrink-0 items-center bg-[#333] text-[17px] text-[#9a9a9a]">
        <div className="mr-[6px] ml-3 size-[27px] rounded-full border-[3.500px] border-white" />
        <Fit w={153} className="pt-px">Type here to search</Fit>
        <svg viewBox="0 0 16 22" className="mr-[18px] ml-auto h-[22px] w-4" fill="none" stroke="#999" strokeWidth="1.500"><rect x="5" y="1" width="6" height="13" rx="2" /><path d="M1.500 9v6l2 2h9l2-2V9M8 17v4M4.500 21h7" /></svg>
      </div>
      <div className="ml-px w-px shrink-0 bg-black" />
      <div className="flex h-[50px] w-[61px] shrink-0 items-center justify-center"><svg viewBox="0 0 26 18" className="-ml-[6px] h-[18px] w-[26px]" fill="none" stroke="#fff" strokeWidth="1.300"><path d="M5.500 1h15v16h-15zM3.500 3.500h-2.500v11h2.500M22.500 3.500H25v11h-2.500" /></svg></div>
      <TaskItem line="none"><svg viewBox="0 0 28 30" className="h-[30px] w-7"><path fill="none" stroke="#fff" strokeWidth="1.600" d="M8 8C8 3 10 1 13 1s4 3 4 7M12 8c0-4 2-6 4-6s4 2 4 6" /><path fill="#fff" d="M1 10l25-3v22L1 26z" /><path fill="#262626" d="M6 13l6-1v6H6zM13 12l8-1v7h-8zM6 19h6v6l-6-1zM13 19h8v7l-8-1z" /></svg></TaskItem>
      <TaskItem line="split"><svg viewBox="0 0 28 26" className={ic}><path fill="#e8b33d" d="M0 1h11l2 3h13v20H0z" /><path fill="#fbe29a" d="M0 6h28v18H0z" /><path fill="#3cb2e8" d="M5 25V14h18v11h-5v-6h-8v6z" /></svg></TaskItem>
      <TaskItem><svg viewBox="0 0 28 28" className={ic}><circle cx="14" cy="14" r="13.500" fill="#f3c52c" /><path fill="#db4a38" d="M2 7.500A13.500 13.500 0 0 1 26 8H14l-6 9z" /><path fill="#3a9c4b" d="M2 7.500 9 18l7 3-4 6.300A13.500 13.500 0 0 1 2 7.500z" /><circle cx="14" cy="14" r="6.500" fill="#fff" /><circle cx="14" cy="14" r="5" fill="#3f83ec" /></svg></TaskItem>
      <TaskItem line="none"><svg viewBox="0 0 28 28" className={ic}><defs><linearGradient id="ecl" x1="0" y1="0" x2="1" y2="1"><stop offset="0" stopColor="#7a70b8" /><stop offset=".5" stopColor="#3a3073" /><stop offset="1" stopColor="#1e1650" /></linearGradient></defs><circle cx="14.500" cy="14" r="13.500" fill="url(#ecl)" /><path stroke="#a9a4d6" strokeWidth="1.200" d="M1 11.500h27M1 14h27M1 16.500h27" /></svg></TaskItem>
      <TaskItem><svg viewBox="0 0 24 24" className="size-6"><path fill="#f0e38a" d="M0 0h24v14l-9 9H0z" /><path fill="#6b6634" d="M24 14l-9 9V14z" /></svg></TaskItem>
      <TaskItem><svg viewBox="0 0 28 28" className={ic}><path fill="#eef4ea" d="M2 3h20l2 23H2z" /><path stroke="#8a8a8a" strokeDasharray="1 1.500" strokeWidth="2" d="M3 3h18" /><path fill="#b9e68f" d="M3 8h19l1 5H3z" /><path fill="#6cc02f" d="M3 15h20v10H3z" /><path fill="#2a8a3a" d="M7 13c2-4 6-3 8-2 3 0 5 1 4 4-1 4-8 5-11 3-1-1-2-3-1-5z" /><circle cx="11" cy="12" r="1.800" fill="#fff" /><circle cx="16" cy="12" r="1.800" fill="#fff" /><path stroke="#12501d" d="M8 20l-2 3M12 19l-1 4M17 18l3 4" /><path stroke="#e59a29" strokeWidth="2.500" d="M27 1l-6 20" /></svg></TaskItem>
      <TaskItem active line="split"><Firefox className="size-[30px]" /></TaskItem>
      <TaskItem line="split"><svg viewBox="0 0 28 28" className={ic}><path fill="#fff" stroke="#21744a" d="M14 4h13v20H14z" /><path stroke="#21744a" strokeWidth="2" d="M17 8h8M17 12h8M17 16h8M17 20h8" /><path fill="#1e7145" d="M0 3l16-3v28L0 25z" /><path stroke="#fff" strokeWidth="2.300" d="M4 9l8 10M12 9 4 19" /></svg></TaskItem>
      <TaskItem line="split"><svg viewBox="0 0 28 28" className={ic}><path fill="#9c4a9c" d="M1 3l20-2 5 5v5H3z" /><path fill="#2140d0" d="M2 11h24v7H3z" /><path fill="#3b7f38" d="M3 18h24v8H5z" /><path stroke="#e4e4e4" strokeWidth="1.200" d="M5 9h21M5 16.500h21M6 24.500h21" /><path fill="#8a5a36" d="M13 2h5v25h-5z" /><path fill="none" stroke="#d8c45a" strokeWidth="1.500" d="M12.500 11.500h6.500v6h-6.500z" /></svg></TaskItem>
      <TaskItem line="split"><svg viewBox="0 0 28 28" className={ic}><defs><linearGradient id="np" x1="0" y1="0" x2="0" y2="1"><stop offset="0" stopColor="#c4e6ee" /><stop offset="1" stopColor="#3c94ad" /></linearGradient></defs><path fill="#e3e0d8" d="M19 1h3l5 20-3 5z" /><path fill="url(#np)" d="M8 1h12l4 25-22-2z" /><path stroke="#eee" strokeWidth="1.500" strokeDasharray="1.500 1" d="M8 1.500h13" /></svg></TaskItem>
      <svg viewBox="0 0 212 50" className="ml-auto h-[50px] w-[212px] shrink-0" fill="none" stroke="#f0f0f0" strokeWidth="1.400">
        <path d="M13 29l8-8 8 8" />
        <path stroke="#aaa" d="M55 32A17 17 0 0 1 69 19" /><path d="M59 32a13 13 0 0 1 11-9M63 32a8 8 0 0 1 7-5" /><circle cx="68" cy="31" r="1.500" fill="#fff" />
        <path d="M96 21h16v11H94v-6M90 19v4h6v-4M93 23v4" /><path fill="#fff" stroke="none" d="M98 23h12v7H98z" />
        <path d="M131 23h3l5-4v14l-5-4h-3zM142 22l7 8M149 22l-7 8" /><path d="M172 18h28v16h-28z" /><path strokeDasharray="2 1.500" d="M175 22h22M175 26h22" /><path d="M175 30h3M181 30h10M194 30h3" />
      </svg>
      <div className="flex w-[82px] shrink-0 flex-col items-center pt-[2px] text-[14px] leading-[23px] text-white"><Fit w={52}>6:24 PM</Fit><Fit w={60}>5/1/2017</Fit></div>
      <div className="relative w-[60px] shrink-0">
        <svg viewBox="0 0 20 20" className="absolute top-[15px] left-[15px] size-5"><path fill="#fff" d="M0 0h20v16h-9l-5 4v-4H0z" /><path stroke="#262626" strokeWidth="1.500" d="M4 4h12M4 8h12M4 12h8" /></svg>
        <div className="absolute top-[24px] left-[24px] flex size-[21px] items-center justify-center rounded-full border border-[#999] bg-[#333] text-[12px] font-semibold text-white">19</div>
      </div>
      <div className="w-[6px] shrink-0 border-l border-[#888] bg-[#111]" />
    </div>
  );
}

export default function App() {
  return (
    <div className="h-[1080px] w-[1920px] overflow-hidden font-['Open_Sans','Noto_Sans',sans-serif]">
      <TabStrip />
      <Toolbar />
      <Page />
      <Taskbar />
    </div>
  );
}
